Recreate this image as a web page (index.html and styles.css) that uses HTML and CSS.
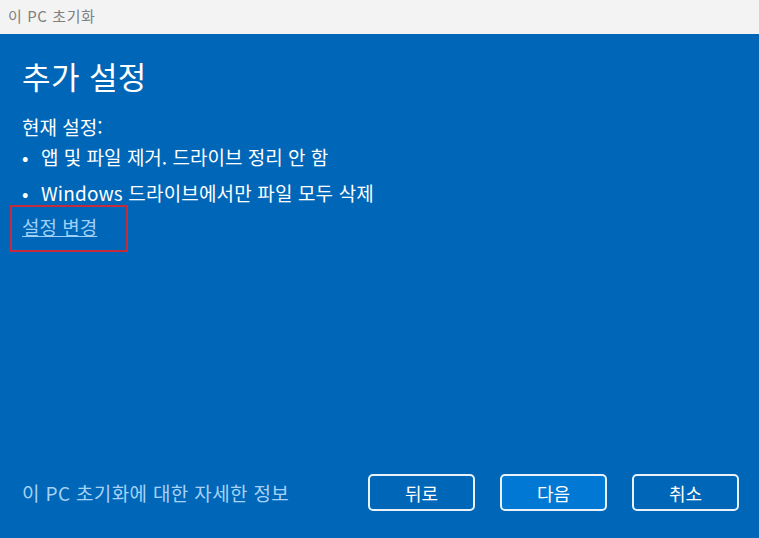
FILE: index.html
```html
<!DOCTYPE html>
<html lang="ko">
<head>
    <meta charset="UTF-8">
    <meta name="viewport" content="width=device-width, initial-scale=1.0">
    <title>이 PC 초기화</title>
    <link rel="stylesheet" href="styles.css">
</head>
<body>
    <div class="title-bar">이 PC 초기화</div>
    <div class="window">
        <div class="content">
            <h1 class="heading">추가 설정</h1>
            <p class="current">현재 설정:</p>
            <ul class="settings">
                <li>앱 및 파일 제거. 드라이브 정리 안 함</li>
                <li>Windows 드라이브에서만 파일 모두 삭제</li>
            </ul>
            <div class="change-box">
                <a href="#" class="change-link">설정 변경</a>
            </div>
        </div>
        <div class="footer">
            <a href="#" class="more-info">이 PC 초기화에 대한 자세한 정보</a>
            <div class="buttons">
                <button class="button">뒤로</button>
                <button class="button primary">다음</button>
                <button class="button">취소</button>
            </div>
        </div>
    </div>
</body>
</html>
```

FILE: styles.css
```css
body {
    font-family: "Noto Sans CJK KR", "Noto Sans", sans-serif;
    margin: 0;
    padding: 0;
    width: 759px;
    height: 538px;
    overflow: hidden;
}

.title-bar {
    height: 34px;
    background-color: #f3f3f3;
    color: #808080;
    font-size: 15px;
    letter-spacing: 0.6px;
    line-height: 32px;
    padding-left: 8px;
}

.window {
    background-color: #0067b8;
    color: #fff;
    height: 504px;
    display: flex;
    flex-direction: column;
    justify-content: space-between;
}

.content {
    padding: 22px 0 0 22px;
}

.heading {
    font-size: 31px;
    font-weight: normal;
    letter-spacing: 0.4px;
    margin: 0 0 18px 0;
    line-height: 40px;
}

.current {
    font-size: 19px;
    margin: 0;
    line-height: 26px;
}

.settings {
    list-style: none;
    margin: 4px 0 0 0;
    padding: 0;
}

.settings li {
    font-size: 19px;
    line-height: 26px;
    margin-bottom: 10px;
}

.settings li:last-child {
    letter-spacing: 0.15px;
}

.settings li::before {
    content: "•";
    display: inline-block;
    width: 19px;
}

.change-box {
    display: inline-block;
    margin: -11px 0 0 -12px;
    padding: 7px 29px 10px 10px;
    border: 2px solid #c42b3c;
}

.change-link {
    color: #9fd0f8;
    font-size: 19px;
    line-height: 26px;
}

.footer {
    display: flex;
    align-items: center;
    justify-content: space-between;
    padding: 0 20px 27px 22px;
}

.more-info {
    color: #a6d2f6;
    text-decoration: none;
    font-size: 19px;
    letter-spacing: 0.35px;
}

.buttons {
    display: flex;
    gap: 25px;
}

.button {
    width: 107px;
    height: 37px;
    background-color: transparent;
    color: #fff;
    border: 2px solid #e8f2fb;
    border-radius: 5px;
    font-family: inherit;
    font-size: 18px;
}

.primary {
    background-color: #0078d4;
}
```
